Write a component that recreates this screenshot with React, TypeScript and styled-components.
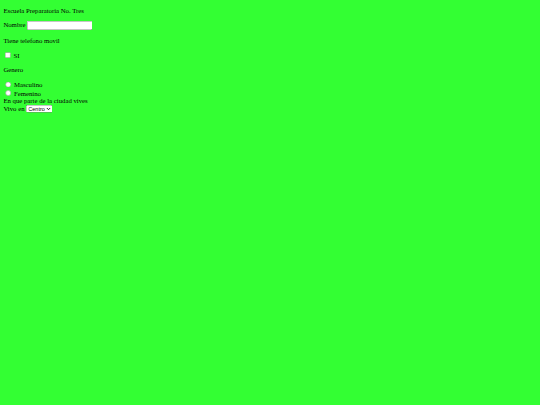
import React from "react";
import styled, { createGlobalStyle } from "styled-components";

const GlobalStyle = createGlobalStyle`
  body {
    margin: 0;
    background: #33ff33;
  }
`;

// the form is drawn at 1280px wide and shown shrunk to the 540px window
const Page = styled.div`
  display: flow-root;
  width: 1264px;
  padding: 0 8px;
  transform: scale(0.421875);
  transform-origin: 0 0;
  font-family: "Liberation Serif", "Times New Roman", serif;
  font-size: 16px;
  color: #000;
`;

const Para = styled.p`
  margin: 16px 0;
`;

const TextInput = styled.input`
  box-sizing: border-box;
  width: 155px;
  height: 21px;
`;

const Lugar = styled.select`
  box-sizing: border-box;
  width: 62px;
  height: 18px;
  font-size: 13px;
  font-family: "Liberation Sans", Arial, sans-serif;
`;

const App = () => {
  return (
    <>
      <GlobalStyle />
      <Page>
        <Para>Escuela Preparatoria No. Tres</Para>
        <form>
          <Para>
            Nombre <TextInput type="text" name="nombre" />
          </Para>
          <Para>Tiene telefono movil</Para>
          <Para>
            <input type="checkbox" name="movil" /> SI
          </Para>
          <Para>Genero</Para>
          <input type="radio" name="genero" value="m" /> Masculino
          <br />
          <input type="radio" name="genero" value="f" /> Femenino
          <br />
          En que parte de la ciudad vives
          <br />
          Vivo en{" "}
          <Lugar name="zona" defaultValue="centro">
            <option value="centro">Centro</option>
            <option value="norte">Norte</option>
            <option value="sur">Sur</option>
            <option value="oriente">Oriente</option>
            <option value="poniente">Poniente</option>
          </Lugar>
        </form>
      </Page>
    </>
  );
};

export default App;
